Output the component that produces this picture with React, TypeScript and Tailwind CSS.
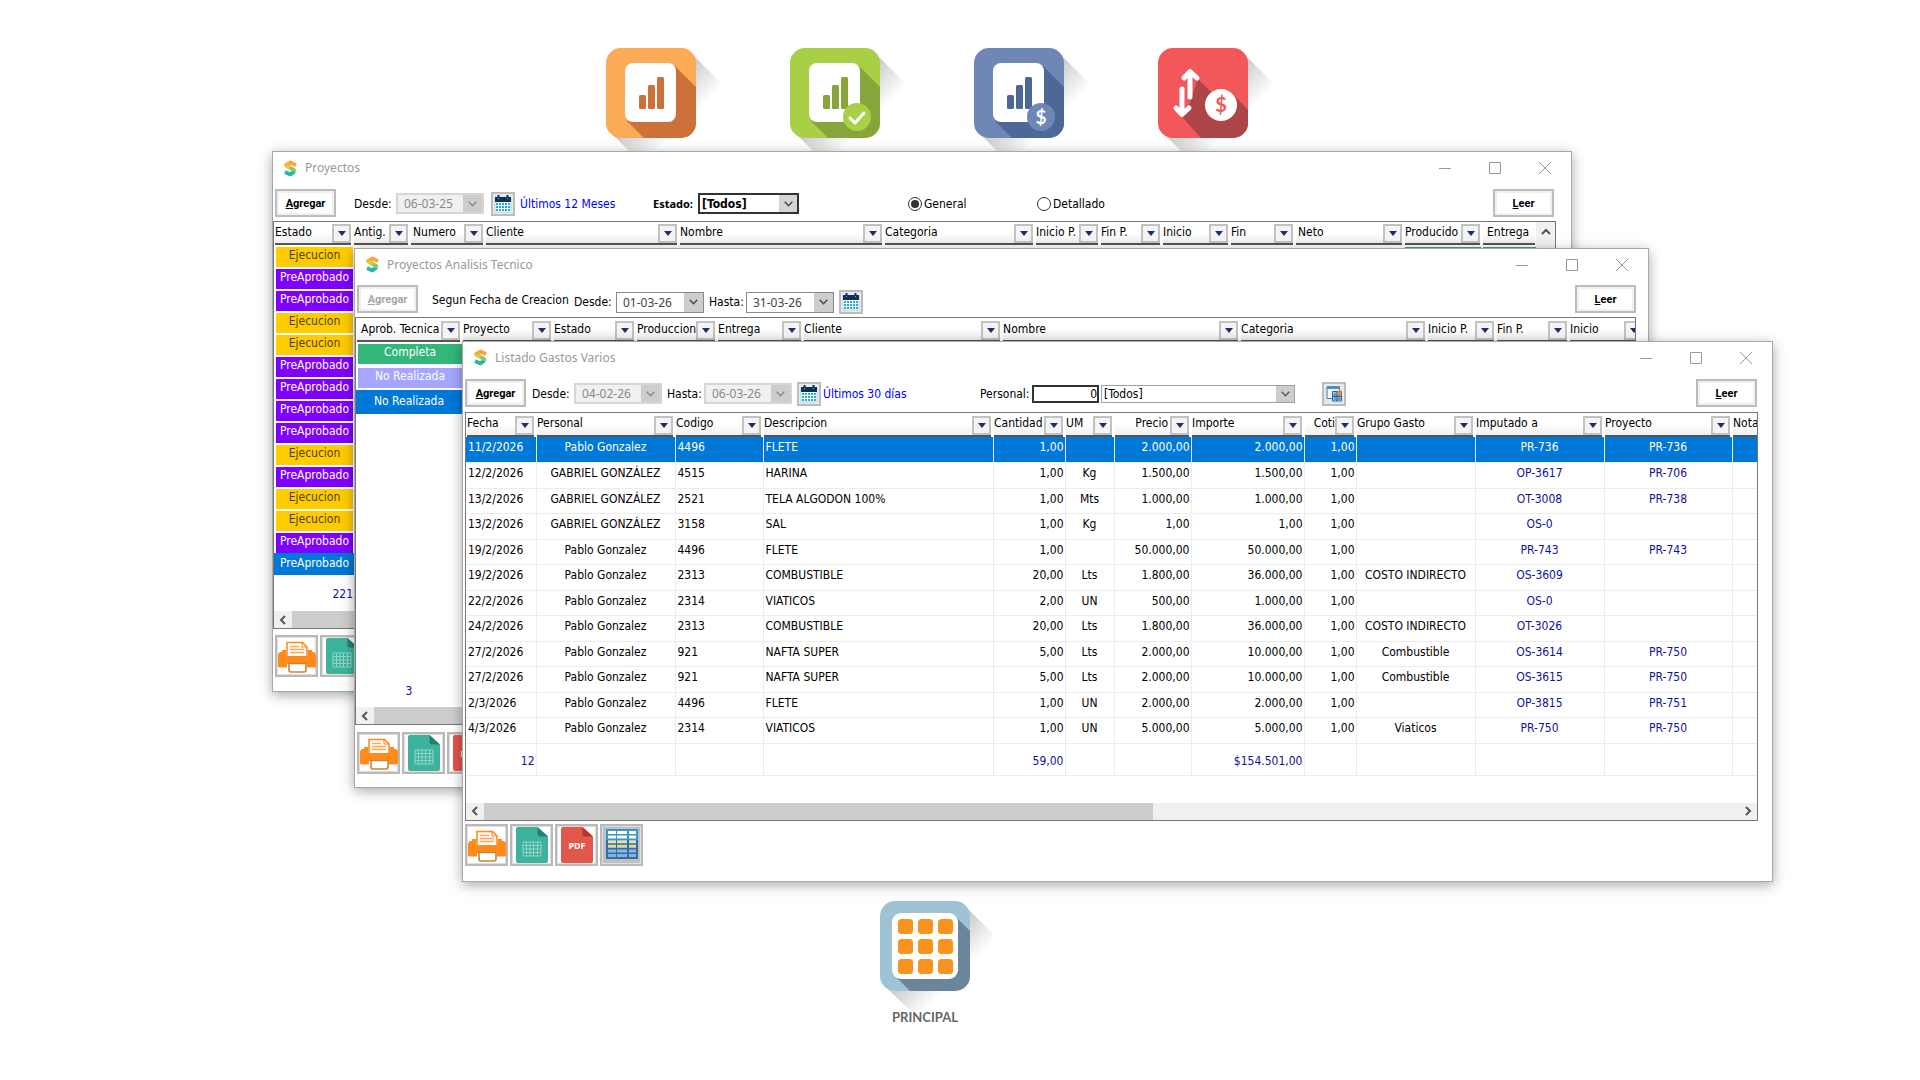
import React, { useId } from 'react'
import type { ReactNode } from 'react'

type Align = 'left' | 'center' | 'right'

type Column = {
    name: string
    width: string
    align?: Align
    blue?: boolean
    noFilter?: boolean
    head?: string
}

const alignClass = {
    left: 'text-left pl-[2px]',
    center: 'text-center',
    right: 'text-right pr-px',
}

const projectColumns: Column[] = [
    { name: 'Estado', width: 'w-[79px]' },
    { name: 'Antig.', width: 'w-[57px]' },
    { name: 'Numero', width: 'w-[75px]', head: 'pl-[2px]' },
    { name: 'Cliente', width: 'w-[194px]' },
    { name: 'Nombre', width: 'w-[205px]' },
    { name: 'Categoria', width: 'w-[151px]' },
    { name: 'Inicio P.', width: 'w-[65px]' },
    { name: 'Fin P.', width: 'w-[62px]' },
    { name: 'Inicio', width: 'w-[68px]' },
    { name: 'Fin', width: 'w-[65px]' },
    { name: 'Neto', width: 'w-[109px]', head: 'pl-[2px]' },
    { name: 'Producido', width: 'w-[78px]' },
    { name: 'Entrega', width: 'w-[55px]', noFilter: true, head: 'pl-1' },
]

const projectStates = [
    'Ejecucion', 'PreAprobado', 'PreAprobado', 'Ejecucion', 'Ejecucion',
    'PreAprobado', 'PreAprobado', 'PreAprobado', 'PreAprobado', 'Ejecucion',
    'PreAprobado', 'Ejecucion', 'Ejecucion', 'PreAprobado', 'PreAprobado',
]

const analysisColumns: Column[] = [
    { name: 'Aprob. Tecnica', width: 'w-[106px]', head: 'pl-1' },
    { name: 'Proyecto', width: 'w-[91px]' },
    { name: 'Estado', width: 'w-[83px]' },
    { name: 'Produccion', width: 'w-[79px]' },
    { name: 'Entrega', width: 'w-[86px]' },
    { name: 'Cliente', width: 'w-[199px]' },
    { name: 'Nombre', width: 'w-[238px]' },
    { name: 'Categoria', width: 'w-[187px]' },
    { name: 'Inicio P.', width: 'w-[69px]' },
    { name: 'Fin P.', width: 'w-[73px]' },
    { name: 'Inicio', width: 'w-[76px]' },
]

const expenseColumns: Column[] = [
    { name: 'Fecha', width: 'w-[70px]' },
    { name: 'Personal', width: 'w-[139px]', align: 'center' },
    { name: 'Codigo', width: 'w-[88px]' },
    { name: 'Descripcion', width: 'w-[230px]' },
    { name: 'Cantidad', width: 'w-[72px]', align: 'right' },
    { name: 'UM', width: 'w-[49px]', align: 'center' },
    { name: 'Precio', width: 'w-[77px]', align: 'right', head: 'justify-end pr-[2px]' },
    { name: 'Importe', width: 'w-[113px]', align: 'right' },
    { name: 'Coti', width: 'w-[52px]', align: 'right', head: 'justify-end' },
    { name: 'Grupo Gasto', width: 'w-[119px]', align: 'center' },
    { name: 'Imputado a', width: 'w-[129px]', align: 'center', blue: true },
    { name: 'Proyecto', width: 'w-[128px]', align: 'center', blue: true },
    { name: 'Nota', width: 'w-[60px]', noFilter: true },
]

const expenses = [
    ['11/2/2026', 'Pablo Gonzalez', '4496', 'FLETE', '1,00', '', '2.000,00', '2.000,00', '1,00', '', 'PR-736', 'PR-736', ''],
    ['12/2/2026', 'GABRIEL GONZÁLEZ', '4515', 'HARINA', '1,00', 'Kg', '1.500,00', '1.500,00', '1,00', '', 'OP-3617', 'PR-706', ''],
    ['13/2/2026', 'GABRIEL GONZÁLEZ', '2521', 'TELA ALGODON 100%', '1,00', 'Mts', '1.000,00', '1.000,00', '1,00', '', 'OT-3008', 'PR-738', ''],
    ['13/2/2026', 'GABRIEL GONZÁLEZ', '3158', 'SAL', '1,00', 'Kg', '1,00', '1,00', '1,00', '', 'OS-0', '', ''],
    ['19/2/2026', 'Pablo Gonzalez', '4496', 'FLETE', '1,00', '', '50.000,00', '50.000,00', '1,00', '', 'PR-743', 'PR-743', ''],
    ['19/2/2026', 'Pablo Gonzalez', '2313', 'COMBUSTIBLE', '20,00', 'Lts', '1.800,00', '36.000,00', '1,00', 'COSTO INDIRECTO', 'OS-3609', '', ''],
    ['22/2/2026', 'Pablo Gonzalez', '2314', 'VIATICOS', '2,00', 'UN', '500,00', '1.000,00', '1,00', '', 'OS-0', '', ''],
    ['24/2/2026', 'Pablo Gonzalez', '2313', 'COMBUSTIBLE', '20,00', 'Lts', '1.800,00', '36.000,00', '1,00', 'COSTO INDIRECTO', 'OT-3026', '', ''],
    ['27/2/2026', 'Pablo Gonzalez', '921', 'NAFTA SUPER', '5,00', 'Lts', '2.000,00', '10.000,00', '1,00', 'Combustible', 'OS-3614', 'PR-750', ''],
    ['27/2/2026', 'Pablo Gonzalez', '921', 'NAFTA SUPER', '5,00', 'Lts', '2.000,00', '10.000,00', '1,00', 'Combustible', 'OS-3615', 'PR-750', ''],
    ['2/3/2026', 'Pablo Gonzalez', '4496', 'FLETE', '1,00', 'UN', '2.000,00', '2.000,00', '1,00', '', 'OP-3815', 'PR-751', ''],
    ['4/3/2026', 'Pablo Gonzalez', '2314', 'VIATICOS', '1,00', 'UN', '5.000,00', '5.000,00', '1,00', 'Viaticos', 'PR-750', 'PR-750', ''],
]

const expenseTotals = ['12', '', '', '', '59,00', '', '', '$154.501,00', '', '', '', '', '']

/* ---------- icons ---------- */

function LogoIcon() {
    return (
        <svg width="13" height="17" viewBox="0 0 13 17" fill="none" strokeWidth="3.8" strokeLinejoin="round">
            <path d="M10.6 11.4 6.4 14.4 1 12" stroke="#2bb5a6" />
            <path d="M2.4 5 10.4 10.4v1.4" stroke="#8ccb5a" />
            <path d="M12 5.2 6.6 2.4 2.2 5v1.4" stroke="#fba63c" />
            <path d="M2.4 5.6 6 8.200" stroke="#e9c93c" />
        </svg>
    )
}

function CalendarIcon() {
    return (
        <svg width="18" height="18" viewBox="0 0 18 18">
            <path d="M1 3h16v14H1z" fill="#fff" stroke="#b5d9e6" />
            <path d="M1 2h16v5H1z" fill="#0b3157" />
            <path d="M4.5 0v4M13.5 0v4" stroke="#0b3157" strokeWidth="2" />
            <path d="M4.5 3v1M13.5 3v1" stroke="#7fa7c9" />
            {[8, 11, 14].map((y) =>
                [2, 5, 8, 11, 14].map((x) => <rect key={`${x}-${y}`} x={x} y={y} width="2" height="2" fill="#22aed0" />)
            )}
        </svg>
    )
}

function WindowGridIcon() {
    return (
        <svg width="16" height="17" viewBox="0 0 16 17">
            <path d="M1 1.5h12.5v12H1z" fill="#eef7fc" stroke="#3c79ad" />
            <path d="M1 1h13v3H1z" fill="#4a8ec2" />
            <path d="M6.5 6.5h9V16h-9z" fill="#dcebf7" stroke="#2a5f9a" />
            <path d="M6.5 11.2h9M11 6.5V16" stroke="#2a5f9a" strokeWidth="1.4" />
            <path d="M7.5 7.5h2.6v3H7.5zM7.5 12.2h2.6v3H7.5zM12 12.2h2.8v3H12z" fill="#5b9bd5" />
            <path d="M11.5 5.5h4v5h-4z" fill="#e58a35" />
        </svg>
    )
}

function PrinterIcon() {
    return (
        <svg width="38" height="36" viewBox="0 0 38 36">
            <path d="M2 14h6v6h22v-6h6q2 1 2 3v11q0 1.5-2 1.5h-7V26H9v3.5H2Q0 29.5 0 28V17q0-2 2-3z" fill="#ff8c1a" />
            <path d="M4 12h4v3H4zM30 12h4v3h-4z" fill="#ff8c1a" />
            <path d="M9 19V4.5h15.5L29 9v10z" fill="#fff" stroke="#ff8c1a" strokeWidth="1.6" />
            <path d="M24 4.5V9h5" fill="none" stroke="#ff8c1a" strokeWidth="1.2" />
            <path d="M12 8.5h9M12 11.5h14M12 14.5h14" stroke="#ffa64d" strokeWidth="1.4" />
            <path d="M8 18h22v7H8z" fill="#ff8c1a" />
            <path d="M11 25.500h17v6.500q0 2-2 2H13q-2 0-2-2z" fill="#fff" stroke="#c98238" strokeWidth="1.6" />
        </svg>
    )
}

function FileShape({ main, fold, children }: { main: string; fold: string; children: ReactNode }) {
    return (
        <svg width="38" height="36" viewBox="0 0 38 36">
            <path d="M5 0h19.5L35 9.500V34q0 2-2 2H5q-2 0-2-2V2q0-2 2-2z" fill={main} />
            <path d="M24.500 0 35 9.500h-8.500q-2 0-2-2z" fill={fold} />
            {children}
        </svg>
    )
}

function SheetIcon() {
    return (
        <FileShape main="#3db39e" fold="#27806f">
            <path
                d="M10 15h18v14H10zM10 18.5h18M10 22h18M10 25.5h18M13.5 15v14M17 15v14M20.5 15v14M24.5 15v14"
                fill="none"
                stroke="#8fd6c9"
            />
        </FileShape>
    )
}

function PdfIcon() {
    return (
        <FileShape main="#e2574c" fold="#b53629">
            <text x="19" y="22" textAnchor="middle" fontSize="9" fontWeight="700" fill="#fff" fontFamily="Noto Sans, sans-serif">PDF</text>
        </FileShape>
    )
}

function GridIcon() {
    const fills = ['#ffffff', '#f4fafd', '#e8e0ae', '#e0d8a4', '#8fb8e8', '#8ab0e0']
    return (
        <svg width="38" height="36" viewBox="0 0 38 36">
            <path d="M3 2h32v30H3z" fill="#3c96c8" />
            <path d="M3 13h32v19H3z" fill="#2f6fa5" />
            {fills.map((fill, i) => (
                <path key={i} d={`M5 ${4 + i * 4.6}h8v3H5zM14 ${4 + i * 4.6}h10v3H14zM26 ${4 + i * 4.6}h7v3h-7z`} fill={fill} />
            ))}
        </svg>
    )
}

function TileBase({ id, color, children }: { id: string; color: string; children: ReactNode }) {
    return (
        <svg className="overflow-visible" width="90" height="90" viewBox="0 0 90 90">
            <defs>
                <linearGradient id={id} x1="45" y1="45" x2="77" y2="77" gradientUnits="userSpaceOnUse">
                    <stop offset="0" stopColor="#000" stopOpacity="0.25" />
                    <stop offset="1" stopColor="#000" stopOpacity="0" />
                </linearGradient>
                <clipPath id={`${id}-clip`}>
                    <rect width="90" height="90" rx="15" />
                </clipPath>
            </defs>
            <path d="M84 4 114 34V110H30L6 86z" fill={`url(#${id})`} />
            <rect width="90" height="90" rx="15" fill={color} />
            <g clipPath={`url(#${id}-clip)`}>{children}</g>
        </svg>
    )
}

function ReportTile({ id, color, dark, children }: { id: string; color: string; dark: string; children?: ReactNode }) {
    return (
        <TileBase id={id} color={color}>
            <path d="M68 17 90 39V90H38L21 73z" fill={dark} />
            <rect x="19" y="15" width="51" height="59" rx="8" fill="#fff" />
            <rect x="33" y="47" width="7" height="14" rx="1.5" fill={dark} />
            <rect x="42" y="37" width="7" height="24" rx="1.5" fill={dark} />
            <rect x="51" y="29" width="7" height="32" rx="1.5" fill={dark} />
            {children}
        </TileBase>
    )
}

function CashFlowTile() {
    return (
        <TileBase id="cash" color="#f1575b">
            <path d="M40 31 58 49 74 45 90 62V90H43L24 69l5-6z" fill="#ad4549" />
            <g fill="none" stroke="#fff" strokeWidth="5" strokeLinecap="round" strokeLinejoin="round">
                <path d="M32 49V24M26 30l6-6.5 7 6.500" />
                <path d="M24 41V66M18 60l6 6.500 7-6.500" />
            </g>
            <circle cx="63" cy="57" r="16" fill="#fff" />
            <text x="63" y="64" textAnchor="middle" fontSize="20" fontWeight="700" fill="#f1575b" fontFamily="Lato, sans-serif">$</text>
        </TileBase>
    )
}

function PrincipalTile() {
    return (
        <TileBase id="principal" color="#9ec3d4">
            <path d="M75 15 90 30V90H30L15 75z" fill="#6b869c" />
            <rect x="12" y="12" width="66" height="66" rx="9" fill="#fff" />
            {[18, 38, 58].map((y) =>
                [18, 38, 58].map((x) => <rect key={`${x}-${y}`} x={x} y={y} width="15" height="15" rx="3.5" fill="#f7931e" />)
            )}
        </TileBase>
    )
}

/* ---------- controls ---------- */

function PushButton({ label, disabled = false }: { label: string; disabled?: boolean }) {
    return (
        <button
            type="button"
            disabled={disabled}
            className="mb-px block h-[28px] w-[61px] shrink-0 border-2 border-[#bcbcbc] bg-white pt-px text-center font-['Roboto',sans-serif] text-[11px] font-bold leading-none text-black shadow-[inset_0_0_0_2px_#f0f0f0] disabled:text-[#a5a5a5]"
        >
            <span className="underline">{label[0]}</span>
            {label.slice(1)}
        </button>
    )
}

function Chevron() {
    return (
        <svg width="9" height="6" viewBox="0 0 9 6" fill="none" stroke="currentColor" strokeWidth="1.3">
            <path d="M.7.8 4.5 4.800 8.300.8" />
        </svg>
    )
}

function DateField({ label, value, labelWidth, disabled = false }: { label: string; value: string; labelWidth: string; disabled?: boolean }) {
    const id = useId()
    return (
        <div className="flex shrink-0 items-center">
            <label htmlFor={id} className={`${labelWidth} whitespace-nowrap`}>{label}</label>
            <div className={disabled ? 'flex h-[21px] w-[88px] border-2 border-[#d6d6d6] bg-[#f0f0f0] text-[#8a8a8a]' : 'flex h-[21px] w-[88px] border border-[#8a8a8a] bg-white text-[#444]'}>
                <input id={id} defaultValue={value} disabled={disabled} className="w-full min-w-0 flex-1 pl-[6px] font-['Noto_Sans',sans-serif] text-[12px] leading-none" />
                <button type="button" disabled={disabled} aria-label={`Elegir ${label}`} className="flex w-[19px] shrink-0 items-center justify-center bg-[#cdcdcd]">
                    <Chevron />
                </button>
            </div>
        </div>
    )
}

function IconButton({ label, children }: { label: string; children: ReactNode }) {
    return (
        <button type="button" aria-label={label} className="flex h-[24px] w-[24px] shrink-0 items-center justify-center border-2 border-[#bcbcbc] bg-[#e9e9e9]">
            {children}
        </button>
    )
}

function FooterButton({ label, active = false, children }: { label: string; active?: boolean; children: ReactNode }) {
    return (
        <button
            type="button"
            aria-label={label}
            className={`flex h-[42px] w-[43px] shrink-0 items-center justify-center border-2 border-[#b9b9b9] shadow-[inset_0_0_0_1px_#dedede] ${active ? 'bg-[#c0c0c0]' : 'bg-white'}`}
        >
            {children}
        </button>
    )
}

function Footer({ className }: { className: string }) {
    return (
        <div className={`flex gap-[2px] pl-[2px] ${className}`}>
            <FooterButton label="Imprimir"><PrinterIcon /></FooterButton>
            <FooterButton label="Exportar a planilla"><SheetIcon /></FooterButton>
            <FooterButton label="Exportar a PDF"><PdfIcon /></FooterButton>
            <FooterButton label="Ver grilla" active><GridIcon /></FooterButton>
        </div>
    )
}

function ScrollArrow({ dir }: { dir: 'left' | 'right' | 'up' }) {
    const paths = {
        left: 'M7 1 3 5l4 4',
        right: 'M3 1l4 4-4 4',
        up: 'M1 7l4-4 4 4',
    }
    return (
        <svg width="10" height="10" viewBox="0 0 10 10" fill="none" stroke="#555" strokeWidth="2">
            <path d={paths[dir]} />
        </svg>
    )
}

function ScrollBar({ thumb }: { thumb: string }) {
    return (
        <div className="flex h-[17px] items-center bg-[#f0f0f0]">
            <button type="button" aria-label="Desplazar a la izquierda" className="flex w-[18px] shrink-0 justify-center"><ScrollArrow dir="left" /></button>
            <div className="h-full flex-1">
                <div className={`h-full bg-[#cdcdcd] ${thumb}`} />
            </div>
            <button type="button" aria-label="Desplazar a la derecha" className="flex w-[18px] shrink-0 justify-center"><ScrollArrow dir="right" /></button>
        </div>
    )
}

function HeaderRow({ columns, height, line }: { columns: Column[]; height: string; line: string }) {
    return (
        <thead>
            <tr className={height}>
                {columns.map((col, i) => (
                    <th key={i} className={`${col.width} p-0 font-normal`}>
                        <div className={`ml-px mr-[2px] flex ${height} border-b-2 border-[#555] bg-linear-to-b from-white from-50% to-[#efefef]`}>
                            <span className={`flex min-w-0 flex-1 overflow-hidden whitespace-nowrap ${line} ${col.head ?? ''}`}>{col.name}</span>
                            {!col.noFilter && (
                                <button type="button" aria-label={`Filtrar ${col.name}`} className="mt-auto flex h-[19px] w-[19px] shrink-0 items-center justify-center border-2 border-[#c2c2c2] bg-[#f4f4f4]">
                                    <svg width="8" height="5" viewBox="0 0 8 5"><path d="M0 0h8L4 5z" fill="#1f2f6b" /></svg>
                                </button>
                            )}
                        </div>
                    </th>
                ))}
            </tr>
        </thead>
    )
}

/* ---------- window ---------- */

function AppWindow({ title, place, bar, children }: { title: string; place: string; bar: string; children: ReactNode }) {
    return (
        <section className={`absolute border border-[#a8a8a8] bg-white shadow-[0_3px_12px_rgba(0,0,0,0.35)] ${place}`}>
            <header className={`flex items-center pb-[2px] pl-[11px] pr-5 ${bar}`}>
                <LogoIcon />
                <h2 className="ml-[8px] font-['Noto_Sans',sans-serif] text-[12px] text-[#999]">{title}</h2>
                <div className="ml-auto flex items-center gap-[38px] text-[#999]">
                    <button type="button" aria-label="Minimizar">
                        <svg width="12" height="12" viewBox="0 0 12 12"><path d="M0 6.5h12" stroke="currentColor" /></svg>
                    </button>
                    <button type="button" aria-label="Maximizar">
                        <svg width="12" height="12" viewBox="0 0 12 12"><path d="M.5.5h11v11H.5z" fill="none" stroke="currentColor" /></svg>
                    </button>
                    <button type="button" aria-label="Cerrar">
                        <svg width="12" height="12" viewBox="0 0 12 12"><path d="M0 0l12 12M12 0 0 12" stroke="currentColor" /></svg>
                    </button>
                </div>
            </header>
            {children}
        </section>
    )
}

function ProjectsWindow() {
    return (
        <AppWindow title="Proyectos" place="left-[272px] right-[348px] top-[151px]" bar="h-[34px]">
            <div className="flex h-[35px] items-center pl-[2px] pr-[17px]">
                <PushButton label="Agregar" />
                <div className="ml-[18px]"><DateField label="Desde:" value="06-03-25" labelWidth="w-[42px]" disabled /></div>
                <div className="ml-[7px]"><IconButton label="Calendario"><CalendarIcon /></IconButton></div>
                <a href="#meses" className="ml-[5px] w-[133px] shrink-0 whitespace-nowrap text-[#0000ff]">Últimos 12 Meses</a>
                <label htmlFor="estado" className="w-[45px] shrink-0 whitespace-nowrap font-['Noto_Sans',sans-serif] text-[11px] font-bold">Estado:</label>
                <div className="relative flex shrink-0 items-center">
                    <select id="estado" className="h-[21px] w-[101px] appearance-none border-2 border-[#333] bg-white pl-[2px] text-[12px] font-bold leading-none">
                        <option>[Todos]</option>
                    </select>
                    <span className="pointer-events-none absolute right-[2px] flex h-[17px] w-[18px] items-center justify-center bg-[#d4d4d4] text-[#444]"><Chevron /></span>
                </div>
                <label className="ml-[109px] flex w-[129px] shrink-0 items-center gap-[2px]">
                    <input type="radio" name="vista" defaultChecked className="size-[14px] appearance-none rounded-full border border-[#333] bg-white bg-clip-content p-[2px] checked:bg-[#333]" />
                    General
                </label>
                <label className="flex shrink-0 items-center gap-[2px]">
                    <input type="radio" name="vista" className="size-[14px] appearance-none rounded-full border border-[#333] bg-white bg-clip-content p-[2px] checked:bg-[#333]" />
                    Detallado
                </label>
                <div className="ml-auto"><PushButton label="Leer" /></div>
            </div>
            <div className="mr-[15px] border border-[#777]">
                <div className="flex">
                    <div className="min-w-0 flex-1 overflow-hidden">
                        <table className="w-max table-fixed border-collapse">
                            <HeaderRow columns={projectColumns} height="h-[23px]" line="leading-[20px]" />
                            <tbody>
                                {projectStates.map((state, i) => {
                                    const selected = i === projectStates.length - 1
                                    return (
                                        <tr key={i} className={`h-[22px] ${selected ? 'bg-[#0078d7]' : ''}`}>
                                            <td className="p-0 text-center">
                                                <div className={`ml-[2px] mt-[2px] h-[20px] leading-[16px] ${selected ? 'text-white' : state === 'Ejecucion' ? 'bg-[#ffcc00] text-[#4d4000]' : 'bg-[#8000ff] text-white'}`}>{state}</div>
                                            </td>
                                            <td colSpan={10} />
                                            <td className="p-0"><div className="ml-px mr-px mt-[2px] h-[20px] bg-[#2fae77]" /></td>
                                            <td className="p-0"><div className="ml-px mr-px mt-[2px] h-[20px] bg-[#2fae77]" /></td>
                                        </tr>
                                    )
                                })}
                                <tr className="h-[36px] text-[#10109a]">
                                    <td className="p-0 pt-[2px] text-right">221</td>
                                    <td colSpan={12} />
                                </tr>
                            </tbody>
                        </table>
                    </div>
                    <div className="w-[19px] shrink-0 bg-[#f0f0f0]">
                        <button type="button" aria-label="Desplazar arriba" className="flex h-[19px] w-full items-center justify-center"><ScrollArrow dir="up" /></button>
                    </div>
                </div>
                <ScrollBar thumb="w-1/2" />
            </div>
            <Footer className="pb-[14px] pt-[6px]" />
        </AppWindow>
    )
}

function AnalysisWindow() {
    return (
        <AppWindow title="Proyectos Analisis Tecnico" place="left-[354px] right-[271px] top-[248px]" bar="h-[33px]">
            <div className="flex h-[35px] items-center pl-[2px] pr-[12px]">
                <PushButton label="Agregar" disabled />
                <span className="ml-[14px] w-[142px] shrink-0 whitespace-nowrap">Segun Fecha de Creacion</span>
                <div className="flex items-center gap-[5px] pt-[5px]">
                    <DateField label="Desde:" value="01-03-26" labelWidth="w-[42px]" />
                    <DateField label="Hasta:" value="31-03-26" labelWidth="w-[37px]" />
                    <IconButton label="Calendario"><CalendarIcon /></IconButton>
                </div>
                <div className="ml-auto"><PushButton label="Leer" /></div>
            </div>
            <div className="mr-[12px] border border-[#777]">
                <div className="overflow-hidden">
                    <table className="w-max table-fixed border-collapse">
                        <HeaderRow columns={analysisColumns} height="h-[24px]" line="leading-[23px]" />
                        <tbody className="text-center text-white">
                            <tr className="h-[24px]">
                                <td className="p-0"><div className="ml-[2px] h-[20px] bg-[#33b679] leading-[16px]">Completa</div></td>
                                <td colSpan={10} />
                            </tr>
                            <tr className="h-[24px]">
                                <td className="p-0"><div className="ml-[2px] h-[20px] bg-[#a6a6ff] leading-[16px]">No Realizada</div></td>
                                <td colSpan={10} />
                            </tr>
                            <tr className="h-[24px] bg-[#0078d7]">
                                <td className="p-0"><div className="pb-[2px] leading-[16px]">No Realizada</div></td>
                                <td colSpan={10} />
                            </tr>
                        </tbody>
                    </table>
                </div>
                <div className="flex h-[293px] w-[106px] items-end justify-center pb-[8px] text-[#10109a]">3</div>
                <ScrollBar thumb="w-1/2" />
            </div>
            <Footer className="pb-[13px] pt-[7px]" />
        </AppWindow>
    )
}

function ExpensesWindow() {
    return (
        <AppWindow title="Listado Gastos Varios" place="left-[462px] right-[147px] top-[341px]" bar="h-[33px]">
            <div className="flex h-[37px] items-center pl-[2px] pr-[15px]">
                <PushButton label="Agregar" />
                <div className="ml-[6px]"><DateField label="Desde:" value="04-02-26" labelWidth="w-[42px]" disabled /></div>
                <div className="ml-[5px]"><DateField label="Hasta:" value="06-03-26" labelWidth="w-[37px]" disabled /></div>
                <div className="ml-[5px]"><IconButton label="Calendario"><CalendarIcon /></IconButton></div>
                <a href="#dias" className="ml-[2px] w-[157px] shrink-0 whitespace-nowrap text-[#0000ff]">Últimos 30 días</a>
                <label htmlFor="personal" className="w-[52px] shrink-0 whitespace-nowrap">Personal:</label>
                <input id="personal" defaultValue="0" className="h-[18px] w-[67px] shrink-0 border-2 border-[#333] bg-white text-right leading-none" />
                <div className="relative ml-[2px] flex shrink-0 items-center">
                    <select aria-label="Personal" className="h-[18px] w-[194px] appearance-none border border-[#a0a0a0] bg-white pl-[2px] text-[12px] leading-none">
                        <option>[Todos]</option>
                    </select>
                    <span className="pointer-events-none absolute right-px flex h-[16px] w-[18px] items-center justify-center bg-[#cdcdcd] text-[#555]"><Chevron /></span>
                </div>
                <div className="ml-[27px]"><IconButton label="Seleccionar personal"><WindowGridIcon /></IconButton></div>
                <div className="ml-auto"><PushButton label="Leer" /></div>
            </div>
            <div className="ml-[2px] mr-[14px] border border-[#777]">
                <div className="overflow-hidden">
                    <table className="w-max table-fixed border-collapse">
                        <HeaderRow columns={expenseColumns} height="h-[24px]" line="leading-[21px]" />
                        <tbody>
                            {expenses.map((row, i) => (
                                <tr key={i} className={`odd:h-[25px] even:h-[26px] ${i === 0 ? 'bg-[#0078d7] text-white' : ''}`}>
                                    {row.map((cell, j) => {
                                        const col = expenseColumns[j]
                                        return (
                                            <td key={j} className={`whitespace-nowrap border-b border-r border-[#ececec] p-0 pb-[4px] leading-none ${alignClass[col.align ?? 'left']} ${col.blue && i > 0 ? 'text-[#10109a]' : ''}`}>
                                                {cell}
                                            </td>
                                        )
                                    })}
                                </tr>
                            ))}
                        </tbody>
                        <tfoot>
                            <tr className="h-[32px] text-[#10109a]">
                                {expenseTotals.map((cell, j) => (
                                    <td key={j} className="whitespace-nowrap border-b border-r border-[#ececec] p-0 pr-px pt-[4px] text-right">{cell}</td>
                                ))}
                            </tr>
                        </tfoot>
                    </table>
                </div>
                <div className="mt-[27px]"><ScrollBar thumb="w-8/15" /></div>
            </div>
            <Footer className="pb-[15px] pt-[3px]" />
        </AppWindow>
    )
}

export default function App() {
    return (
        <main className="relative min-h-screen overflow-hidden bg-white font-['DejaVu_Sans_Condensed','Noto_Sans',sans-serif] text-[12px] leading-4 text-black">
            <nav aria-label="Modulos" className="flex gap-[94px] pl-[606px] pt-[48px]">
                <button type="button" aria-label="Proyectos"><ReportTile id="projects" color="#fbaa56" dark="#cb7139" /></button>
                <button type="button" aria-label="Analisis tecnico">
                    <ReportTile id="analysis" color="#a9cf46" dark="#88a53c">
                        <circle cx="67" cy="69" r="14" fill="#a9cf46" />
                        <path d="M60 70l5 5 9-10" fill="none" stroke="#fff" strokeWidth="3" strokeLinecap="round" strokeLinejoin="round" />
                    </ReportTile>
                </button>
                <button type="button" aria-label="Gastos">
                    <ReportTile id="expenses" color="#6f87b5" dark="#4d6896">
                        <circle cx="67" cy="69" r="14" fill="#6f87b5" />
                        <text x="67" y="76" textAnchor="middle" fontSize="19" fontWeight="700" fill="#fff" fontFamily="Lato, sans-serif">$</text>
                    </ReportTile>
                </button>
                <button type="button" aria-label="Flujo de caja"><CashFlowTile /></button>
            </nav>
            <ProjectsWindow />
            <AnalysisWindow />
            <ExpensesWindow />
            <button type="button" className="absolute left-[880px] top-[901px] flex w-[90px] flex-col items-center">
                <PrincipalTile />
                <span className="mt-[18px] font-['Lato',sans-serif] text-[13px] font-bold leading-4 text-[#666]">PRINCIPAL</span>
            </button>
        </main>
    )
}
